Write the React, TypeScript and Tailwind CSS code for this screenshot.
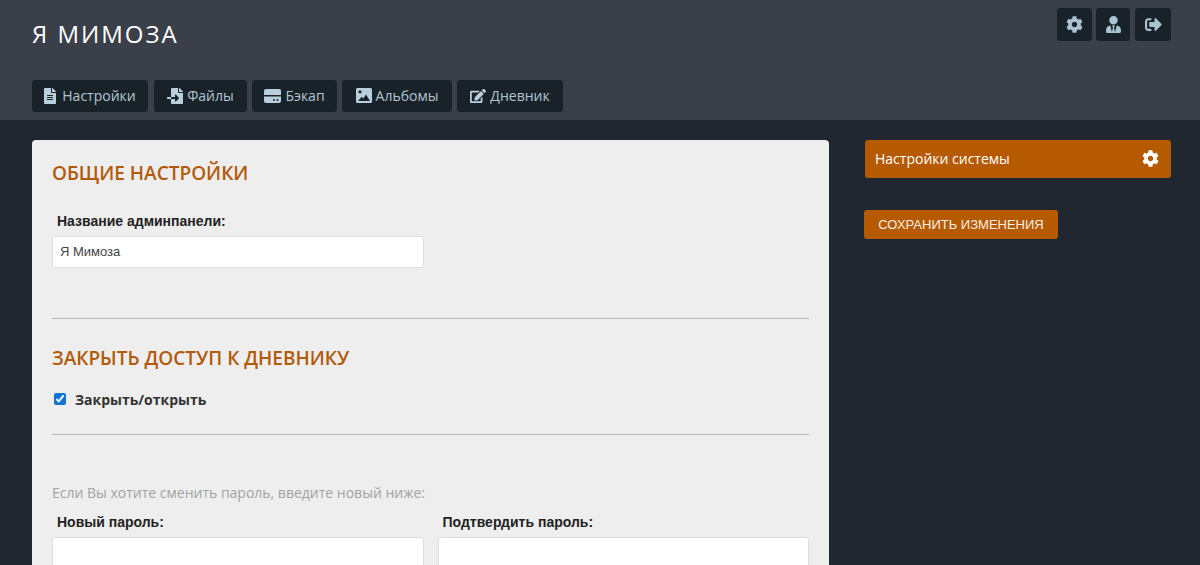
import React from 'react';
import { FaCog, FaEdit, FaFileAlt, FaFileImport, FaSignOutAlt, FaUserTie } from 'react-icons/fa';

function BackupIcon() {
  return (
    <svg width="17" height="14" viewBox="0 0 17 14" fill="currentColor">
      <path d="M2 0h13a2 2 0 0 1 2 2v4H0V2a2 2 0 0 1 2-2z" />
      <path fillRule="evenodd" d="M0 7.5h17V12a2 2 0 0 1-2 2H2a2 2 0 0 1-2-2V7.5zM10 10a1 1 0 1 0 0 2 1 1 0 0 0 0-2zm3.5 0a1 1 0 1 0 0 2 1 1 0 0 0 0-2z" />
    </svg>
  );
}

function AlbumIcon() {
  return (
    <svg width="16" height="15" viewBox="0 0 16 15" fill="currentColor">
      <path fillRule="evenodd" d="M1.5 0h13A1.5 1.5 0 0 1 16 1.5v12a1.5 1.5 0 0 1-1.5 1.5h-13A1.5 1.5 0 0 1 0 13.5v-12A1.5 1.5 0 0 1 1.5 0zM4 2.2a1.6 1.6 0 1 0 0 3.2 1.6 1.6 0 0 0 0-3.2zM2 13h12l-4-6.5-2.7 4-1.5-1.7L2 13z" />
    </svg>
  );
}

const navItems = [
  { label: 'Настройки', icon: <FaFileAlt />, cls: 'w-[116px] pr-[2px]' },
  { label: 'Файлы', icon: <FaFileImport />, cls: 'w-[93px] ml-px' },
  { label: 'Бэкап', icon: <BackupIcon />, cls: 'w-[85px]' },
  { label: 'Альбомы', icon: <AlbumIcon />, cls: 'w-[110px]' },
  { label: 'Дневник', icon: <FaEdit />, cls: 'w-[106px]' },
];

function Field({ label }: { label: string }) {
  return (
    <div className="w-[372px]">
      <label className="block pl-[5px] h-[22px] font-['Liberation_Sans',sans-serif] text-[14px] leading-[22px] font-bold text-[#222]">
        {label}
      </label>
    </div>
  );
}

export default function App() {
  return (
    <div className="h-[565px] overflow-hidden bg-[#212730] font-['Open_Sans',sans-serif]">
      <header className="h-[120px] bg-[#3a3f4a] pl-8 pr-[29px] relative">
        <h1 className="pt-[17px] h-[80px] text-[24px] leading-[33px] tracking-[2px] text-white">Я МИМОЗА</h1>
        <nav className="flex gap-[5px]">
          {navItems.map((item) => (
            <a key={item.label} className={`${item.cls} h-8 pb-px flex items-center justify-center gap-[4px] rounded-[3px] bg-[#1a2229] text-[14px] text-[#b0c6d2]`}>
              <span className="text-[16px] text-[#b9d0dc]">{item.icon}</span>
              {item.label}
            </a>
          ))}
        </nav>
        <div className="absolute right-[29px] top-2 flex">
          <button className="w-[35px] h-[33px] flex items-center justify-center rounded-[3px] bg-[#1a2229] text-[17px] text-[#a9c3d1]"><FaCog /></button>
          <button className="ml-1 w-[34px] h-[33px] flex items-center justify-center rounded-[3px] bg-[#1a2229] text-[17px] text-[#a9c3d1]"><FaUserTie /></button>
          <button className="ml-[5px] w-[36px] h-[33px] flex items-center justify-center rounded-[3px] bg-[#1a2229] text-[17px] text-[#a9c3d1]"><FaSignOutAlt /></button>
        </div>
      </header>

      <div className="flex pl-8 pt-5">
        <main className="w-[797px] h-[500px] rounded-t-[4px] bg-[#eeeeee] px-5 pt-[19px]">
          <h2 className="text-[19px] leading-[28px] font-semibold text-[#b25a08]">ОБЩИЕ НАСТРОЙКИ</h2>
          <div className="mt-[23px]"><Field label="Название админпанели:" /></div>
          <input
            readOnly
            value="Я Мимоза"
            className="block mt-[4px] w-[372px] h-8 pb-[2px] rounded-[3px] border border-[#dddddd] bg-white px-[7px] font-['Liberation_Sans',sans-serif] text-[13px] text-[#444]"
          />
          <hr className="mt-[50px] border-t border-[#b5b5b5]" />

          <h2 className="mt-[25px] text-[19px] leading-[28px] font-semibold text-[#b25a08]">ЗАКРЫТЬ ДОСТУП К ДНЕВНИКУ</h2>
          <label className="flex items-center mt-[17px] h-[20px] pl-[2px] gap-[9px] text-[14px] font-bold text-[#333]">
            <input type="checkbox" checked readOnly className="w-[12px] h-[12px] m-0 accent-[#0f75d3]" />
            Закрыть/открыть
          </label>
          <hr className="mt-[25px] border-t border-[#b5b5b5]" />

          <p className="mt-[48px] text-[14px] leading-[20px] text-[#a2a2a2]">Если Вы хотите сменить пароль, введите новый ниже:</p>
          <div className="mt-[8px] flex gap-[14px]">
            <Field label="Новый пароль:" />
            <Field label="Подтвердить пароль:" />
          </div>
          <div className="mt-[4px] flex gap-[14px]">
            <input readOnly className="block w-[372px] h-8 rounded-[3px] border border-[#dddddd] bg-white" />
            <input readOnly className="block w-[372px] h-8 rounded-[3px] border border-[#dddddd] bg-white" />
          </div>
        </main>

        <aside className="ml-9 w-[306px]">
          <div className="h-[38px] pb-px flex items-center justify-between rounded-[3px] bg-[#b65a00] pl-[10px] pr-[12px] text-[14px] text-white">
            Настройки системы
            <FaCog className="text-[17px]" />
          </div>
          <button className="block mt-[32px] -ml-px w-[194px] h-[29px] rounded-[3px] bg-[#b65a00] font-['Liberation_Sans',sans-serif] text-[13px] text-[#f7efe4]">
            СОХРАНИТЬ ИЗМЕНЕНИЯ
          </button>
        </aside>
      </div>
    </div>
  );
}
